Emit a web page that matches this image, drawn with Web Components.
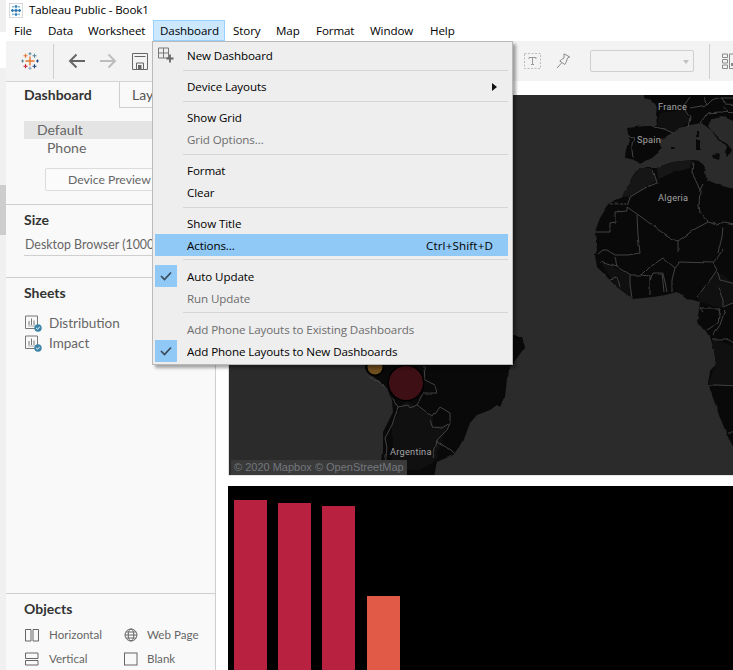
<!DOCTYPE html>
<html lang="en"><head><meta charset="utf-8"><title>Tableau Public - Book1</title>
<style>html,body{margin:0;padding:0;height:670px;overflow:hidden;background:#fff}</style></head>
<body>
<app-shell>
  <title-bar>Tableau Public - Book1</title-bar>
  <menu-bar></menu-bar>
  <tool-bar></tool-bar>
  <div slot="work" style="display:flex;height:589px">
    <side-panel></side-panel>
    <dash-canvas></dash-canvas>
  </div>
  <drop-menu slot="overlay"></drop-menu>
</app-shell>
<script>
const UI='"Open Sans","Noto Sans",sans-serif', TB='Lato,"Open Sans",sans-serif';
function def(name,html,init){
  customElements.define(name,class extends HTMLElement{
    constructor(){super();this.attachShadow({mode:'open'}).innerHTML=typeof html==='function'?html(this):html;}
    connectedCallback(){ if(init) init(this); }
  });
}
def('app-shell',`<style>
:host{display:flex;position:relative;width:733px;height:670px;overflow:hidden;background:#fff;color:#000}
.rail{width:6px;flex:none;display:flex;flex-direction:column}
.rail i{display:block}
main{flex:1;min-width:0;display:flex;flex-direction:column}
</style>
<div class="rail"><i style="height:32px;background:#f0f0f0"></i><i style="height:36px;background:#fff"></i><i style="height:117px;background:#f0f0f0"></i><i style="height:50px;background:#cdcdcd"></i><i style="flex:1;background:#f0f0f0"></i></div>
<main><slot></slot><slot name="work"></slot></main><slot name="overlay"></slot>`);

def('title-bar',`<style>
:host{display:flex;align-items:center;height:20px;font:11.600px/20px ${UI};letter-spacing:-.12px}
svg{margin:0 6px 0 3px;flex:none}
</style>
<svg width="14" height="15" viewBox="0 0 14 15"><rect x=".5" y=".5" width="13" height="14" fill="#fff" stroke="#d8d8d8"/>
<g fill="none" stroke="#2f7fb5" stroke-width="1.3"><path d="M7 2v3M5.6 3.5h2.8M7 10v3M5.6 11.5h2.8M2 7.5h3M3.5 6v3M9 7.5h3M10.5 6v3"/><path d="M7 5.8v3.4M5.3 7.5h3.4" stroke="#1d6aa5"/></g>
<g fill="#5b9cc7"><rect x="3.2" y="3" width="1.5" height="1.5"/><rect x="9.3" y="3" width="1.5" height="1.5"/><rect x="3.2" y="10.6" width="1.5" height="1.5"/><rect x="9.3" y="10.6" width="1.5" height="1.5"/></g></svg>
<slot></slot>`);

def('menu-bar',`<style>
:host{display:flex;align-items:stretch;height:21px;font:11.600px/20px ${UI};letter-spacing:-.1px;padding-left:1px}
span{display:block;flex:none;padding:0 0 0 6px;box-sizing:border-box;height:21px;border:1px solid transparent;border-bottom:0;white-space:nowrap}
.on{background:#cce8ff;border-color:#99d1ff;border-bottom:1px solid #99d1ff}
</style>
<span style="width:34px">File</span><span style="width:40px">Data</span><span style="width:72px">Worksheet</span><span class="on" style="width:72px">Dashboard</span><span style="width:43px;margin-left:1px">Story</span><span style="width:40px">Map</span><span style="width:54px">Format</span><span style="width:60px">Window</span><span style="width:40px">Help</span>`);

def('tool-bar',`<style>
:host{display:flex;align-items:center;height:40px;background:#f3f3f3;box-sizing:border-box}
svg{flex:none;display:block}
.sep{flex:none;width:1px;height:35px;background:#cfcfcf}
.combo{flex:none;width:104px;height:22px;box-sizing:border-box;border:1px solid #cfcfcf;border-radius:2px;position:relative;margin-left:19px}
.combo:after{content:"";position:absolute;right:4px;top:9px;border:3.5px solid transparent;border-top:4px solid #c0c0c0}
</style>
<svg style="margin-left:15px" width="18" height="18" viewBox="0 0 18 18" fill="none" stroke-width="1.1">
<path d="M9 4.5v9M4.5 9h9" stroke="#e8762d" stroke-width="1.4"/>
<path d="M4.5 1.8v4M2.5 3.8h4" stroke="#e8762d"/><path d="M9 .3v3M7.5 1.8h3" stroke="#5b879b"/><path d="M13.5 1.8v4M11.5 3.8h4" stroke="#5b879b"/>
<path d="M1.5 7.6v2.8M.2 9h2.8" stroke="#5b879b"/><path d="M16.5 7.6v2.8M15 9h2.8" stroke="#1f447d"/>
<path d="M4.5 12.2v4M2.5 14.2h4" stroke="#c72035"/><path d="M9 14.7v3M7.5 16.2h3" stroke="#7f9bbd"/><path d="M13.5 12.2v4M11.5 14.2h4" stroke="#1f447d"/></svg>
<div class="sep" style="margin-left:14px"></div>
<svg style="margin-left:14px" width="17" height="16" viewBox="0 0 17 16" fill="none" stroke="#666" stroke-width="2"><path d="M17 8H2M8.5 1.5 2 8l6.500 6.500"/></svg>
<svg style="margin-left:15px" width="17" height="16" viewBox="0 0 17 16" fill="none" stroke="#bdbdbd" stroke-width="2"><path d="M0 8h15M8.500 1.500 15 8l-6.500 6.500"/></svg>
<svg style="margin-left:15px" width="16" height="17" viewBox="0 0 16 17" fill="none" stroke="#666" stroke-width="1"><path d="M.5.5h15v16H.5zM2.500 3.500h11"/><path d="M4.500 16v-6h7v6"/><rect x="6" y="12" width="3.500" height="4.500" fill="#666" stroke="none"/></svg>
<svg style="margin-left:376px" width="18" height="16" viewBox="0 0 18 16" fill="none"><rect x=".5" y=".5" width="16" height="15" stroke="#bdbdbd" stroke-dasharray="2 1.500"/><path d="M5 6V4.500h7V6M8.500 4.500v7M7 11.500h3" stroke="#999" stroke-width="1"/></svg>
<svg style="margin-left:14px" width="15" height="16" viewBox="0 0 15 16" fill="none" stroke="#8a8a8a" stroke-width="1"><path d="M8 .8 13.800 4 11.500 5 10 9.500 8.800 11.500 3.800 8 5.500 6.500 8 5z"/><path d="M5.500 10 1 15"/></svg>
<div class="combo"></div>
<div class="sep" style="margin-left:15px"></div>
<svg style="margin-left:12px" width="12" height="16" viewBox="0 0 12 16" fill="none" stroke="#8a8a8a"><path d="M.5 1h5v3.500h-5zM.5 6.500h5V10h-5zM.5 12h5v3.500h-5zM7.500 1H12v14.500H7.500z"/><rect x="9" y="10" width="3" height="3" fill="#8a8a8a" stroke="none"/></svg>`);

def('side-panel',`<style>
:host{flex:none;width:210px;height:589px;box-sizing:border-box;background:#f9f9f9;border-right:1px solid #cfcfcf;border-top:1px solid #d4d4d4;font:14px/18px ${TB};color:#666;display:flex;flex-direction:column;overflow:hidden}
.tabs{display:flex;height:26px;flex:none}
.tab{width:114px;box-sizing:border-box;padding-left:18px;border-right:1px solid #cfcfcf;font-weight:700;color:#333;line-height:25px;flex:none}
.tab2{flex:1;border-bottom:1px solid #cfcfcf;padding-left:12px;line-height:25px;color:#555}
.layouts{padding:13px 0 13px 18px;border-bottom:1px solid #cfcfcf;height:70px;flex:none}
.def{background:#e4e4e4;padding-left:13px;height:18px;line-height:18px}
.ph{padding-left:23px;height:18px;line-height:18px}
button{display:block;margin:11px 0 0 21px;width:130px;height:23px;box-sizing:border-box;text-align:left;padding:0 0 0 22px;font:12.200px/20px ${TB};color:#666;background:#fbfbfb;border:1px solid #dcdcdc;border-radius:2px}
h3{margin:0;font:700 14px/18px ${TB};color:#333}
.size{padding:6px 0 0 18px;height:73px;box-sizing:border-box;border-bottom:1px solid #cfcfcf;flex:none}
.dsel{margin:6px 6px 0 0;padding:1px 0 0 1px;height:21px;line-height:18px;box-sizing:border-box;border-bottom:1px solid #cfcfcf;font-size:12.400px;white-space:nowrap}
.sheets{padding:6px 0 0 18px;flex:1}
.sh{display:flex;align-items:center;height:20px;margin-left:1px;font-size:13.500px}
.obj{border-top:1px solid #cfcfcf;flex:none;height:77px;padding:6px 0 0 18px;box-sizing:border-box;overflow:hidden}
.grid{display:grid;grid-template-columns:99px 1fr;grid-auto-rows:24px;margin-top:5px;font-size:11.600px;color:#666}
.g{display:flex;align-items:center;margin-left:1px}
.g svg{flex:none;margin-right:10px}
.g2 svg{margin-right:9px}
</style>
<div class="tabs"><div class="tab">Dashboard</div><div class="tab2">Layout</div></div>
<div class="layouts"><div class="def">Default</div><div class="ph">Phone</div><button>Device Preview</button></div>
<div class="size"><h3>Size</h3><div class="dsel">Desktop Browser (1000</div></div>
<div class="sheets"><h3>Sheets</h3><div style="height:11px"></div>
<div class="sh"><sheet-icon></sheet-icon>Distribution</div><div class="sh"><sheet-icon></sheet-icon>Impact</div></div>
<div class="obj"><h3>Objects</h3><div class="grid">
<div class="g"><svg width="14" height="14" viewBox="0 0 14 14" fill="none" stroke="#666"><path d="M.5 1.500h5.500v11.500H.5zM8 1.500h5.500v11.500H8z"/></svg>Horizontal</div>
<div class="g g2"><svg width="14" height="14" viewBox="0 0 14 14" fill="none" stroke="#666"><circle cx="7" cy="7" r="6"/><ellipse cx="7" cy="7" rx="2.800" ry="6"/><path d="M1 7h12M2 4h10M2 10h10"/></svg>Web Page</div>
<div class="g"><svg width="14" height="14" viewBox="0 0 14 14" fill="none" stroke="#666"><path d="M.5 1h12.500v5.500H.5zM.5 8.500h12.500V13H.5z"/></svg>Vertical</div>
<div class="g g2"><svg width="14" height="14" viewBox="0 0 14 14" fill="none" stroke="#666"><rect x=".5" y="1" width="12.500" height="12"/></svg>Blank</div>
</div></div>`);

def('sheet-icon',`<style>:host{display:block;flex:none;margin-right:7px;width:17px;height:17px}svg{display:block}</style>
<svg width="17" height="17" viewBox="0 0 17 17" fill="none"><path d="M.5 1h12v12.500H.5" stroke="#777"/><path d="M.5 1v12.500" stroke="#777"/><path d="M4 10V6M6.500 10V3.500M9 10V5.500" stroke="#777"/><path d="M3 11h7.500" stroke="#777" stroke-width=".6"/><circle cx="13" cy="13" r="3.700" fill="#3d83a8"/><path d="M11.200 13l1.300 1.300 2.200-2.500" stroke="#fff"/></svg>`);

def('dash-canvas',`<style>
:host{display:block;flex:1;min-width:0;height:589px;padding:14px 0 0 12px;box-sizing:border-box;overflow:hidden;background:#fff}
</style><map-view></map-view><bar-chart></bar-chart>`);

def('map-view',`<style>
:host{display:block;position:relative;height:381px;box-sizing:border-box;border-left:1px solid #dedede;border-bottom:1px solid #e6e6e6;background:#2b2b2b;overflow:hidden}
svg{display:block;width:504px;height:381px}
text{font:9.200px Roboto,sans-serif;fill:#a3a3a3;letter-spacing:.25px}
.c{position:absolute;left:2px;bottom:0;height:15px;width:176px;background:#3a3a3a;font:11px/15px "Liberation Sans",sans-serif;color:#72777d;padding-left:3px;box-sizing:border-box;white-space:nowrap}
</style>
<svg viewBox="229 95 504 381">
<defs><filter id="b" x="0" y="0" width="1" height="1" color-interpolation-filters="sRGB"><feTurbulence type="fractalNoise" baseFrequency=".09" numOctaves="2" seed="4" result="n"/><feDisplacementMap in="SourceGraphic" in2="n" scale="3" xChannelSelector="R" yChannelSelector="G"/><feGaussianBlur stdDeviation=".4"/></filter></defs>
<g filter="url(#b)">
<g fill="#090909">
<path d="M645,90 L644,98 L649,100 L657,105 L656,115 L657,126 L645,126 L627,128 L629,140 L626,150 L625,158 L634,160 L639,164 L653,157 L658,153 L662,148 L660,140 L672,133 L680,128 L690,125 L702,123 L712,131 L722,141 L729,146 L732,150 L728,157 L725,152 L727,147 L716,137 L708,126 L712,118 L722,116 L740,124 L740,90Z"/>
<path d="M712,155 L720,154 L719,160 L713,158Z M696,140 L700,140 L700,150 L696,150Z M697,131 L699,131 L699,138 L697,138Z M671,147 L675,147 L674,149 L671,149Z"/>
<path d="M740,190 L722,186 L707,180 L705,172 L706,166 L700,161 L693,160 L683,161 L673,162 L664,165 L657,168 L648,168 L640,168 L635,173 L630,180 L628,188 L623,197 L616,200 L610,203 L605,210 L600,218 L597,226 L595,232 L596,242 L597,250 L595,255 L597,267 L605,275 L612,282 L617,287 L625,293 L633,299 L643,298 L653,297 L665,295 L677,292 L681,295 L685,299 L693,300 L700,302 L699,310 L697,322 L703,329 L710,337 L714,350 L716,363 L710,372 L708,383 L713,398 L720,417 L727,435 L740,460Z"/>
<path d="M365,355 L365,369 L375,378 L387,388 L392,400 L393,412 L388,422 L383,432 L383,450 L381,482 L433,482 L437,462 L453,455 L463,442 L470,423 L477,415 L490,410 L497,405 L500,407 L505,397 L508,370 L517,358 L525,347 L522,338 L513,335 L500,330 L400,330Z"/>
</g>
<g fill="#161616"><path d="M623,197 L630,180 L640,168 L652,169 L656,181 L646,188 L631,196Z"/><path d="M657,168 L673,162 L692,160 L690,168 L672,173 L658,179Z"/></g>
<g fill="#101010"><path d="M600,262 L630,275 L632,298 L617,287Z"/><path d="M697,297 L717,271 L740,287 L740,300 L720,307 L700,302Z"/><path d="M712,339 L740,348 L740,385 L708,385 L716,363Z"/><path d="M660,113 L685,110 L690,122 L672,132 L657,126Z"/><path d="M405,400 L433,417 L433,427 L448,424 L440,445 L437,460 L420,470 L392,470 L392,425Z"/></g>
<g fill="none" stroke="#464646" stroke-width=".95" stroke-linejoin="round">
<path d="M628,137 L634,138 L632,144 L632,150 L633,158"/><path d="M655,127 L664,129 L673,133"/>
<path d="M690,97 L685,104 L685,110 L690,118 L688,127"/><path d="M690,108 L707,105 L712,100 L717,98 L740,98"/><path d="M700,123 L704,118 L707,113 L720,112 L740,113"/><path d="M705,96 L707,105 M722,105 L728,112 M722,98 L725,104 L740,105"/>
<path d="M653,170 L655,176 L657,183 L645,188 L630,197 L627,205"/>
<path d="M610,204 H627" stroke-dasharray="3 1.500"/>
<path d="M627,207 L627,211 L615,212 L615,222 L610,223 L610,232 L595,232"/>
<path d="M627,207 L640,216 L660,231 L675,240 L678,241 L695,229 L708,222"/>
<path d="M637,215 L638,235 L640,253 L628,255 L615,255 L607,250 L603,250 L598,254"/>
<path d="M693,162 L692,173 L696,181 L700,190 L699,205 L700,213 L708,222 L718,225 L723,222 L740,225"/>
<path d="M700,190 L703,184 L707,180"/><path d="M678,241 L678,253"/><path d="M723,227 L722,237 L718,253"/>
<path d="M600,262 L617,267 L615,257 M617,267 L630,275 L630,285 L632,298"/>
<path d="M610,280 L617,278 L620,287"/>
<path d="M630,275 L642,275 L650,267 L663,258 L675,268 L680,262 L713,263 L717,270 L710,280 L697,297"/>
<path d="M642,275 L650,276 L650,295 M653,273 L663,273 L667,292 M653,273 L650,282 M662,273 L664,292 M675,268 L672,280 L672,292"/>
<path d="M713,263 L723,250"/><path d="M717,270 L720,280 L740,285"/><path d="M718,287 L723,300 L723,307"/>
<path d="M700,308 L720,308 L718,323 L707,330"/><path d="M723,307 L740,300"/><path d="M700,308 L703,312 M725,310 L720,325 L713,335"/>
<path d="M712,339 L728,339 L740,348"/><path d="M708,385 L715,385 L740,386"/><path d="M727,432 L740,432"/>
<path d="M424,366 L425,380 L435,385 L437,393 L423,393 L417,405 L433,417 L440,407 L450,413 L450,423 L442,428 L433,427 L430,420"/>
<path d="M417,405 L410,408 L408,405 L398,407 L392,425 L385,438 L387,448 L383,482"/>
<path d="M450,423 L447,430 L437,440 L433,458"/><path d="M437,441 L450,450 L453,453"/><path d="M392,397 L398,407"/><path d="M367,375 L385,387"/>
</g></g>
<circle cx="375" cy="367" r="9.500" fill="#000" opacity=".7"/><circle cx="375" cy="367" r="7.500" fill="#6e4d1e"/>
<circle cx="406" cy="383" r="18.500" fill="#000"/><circle cx="406" cy="383" r="17" fill="#3e0f15"/>
<text x="658" y="110">France</text><text x="637" y="143">Spain</text><text x="658" y="201">Algeria</text><text x="390" y="455">Argentina</text>
</svg>
<div class="c">© 2020 Mapbox © OpenStreetMap</div>`);

def('bar-chart',`<style>
:host{display:flex;align-items:flex-start;height:190px;margin-top:10px;background:#000;overflow:hidden;padding-left:6px}
i{display:block;width:33px;height:200px;background:#b8213f;margin-right:11px;flex:none}
</style><i style="margin-top:14px"></i><i style="margin-top:17px"></i><i style="margin-top:20px;margin-right:12px"></i><i style="margin-top:110px;background:#e05a47"></i>`);

def('drop-menu',`<style>
:host{position:absolute;left:152px;top:41px;width:361px;box-sizing:border-box;height:324px;padding:3px 4px 0 2px;background:#eee;border:1px solid #b9b9b9;box-shadow:3px 3px 3px rgba(0,0,0,.35);font:11.600px/22px ${UI};letter-spacing:-.1px;display:block}
hr{border:0;height:1px;background:#d5d5d5;margin:3px 0 5px 28px}
.low{--dy:2px}
</style>
<menu-item icon="new">New Dashboard</menu-item><hr>
<menu-item arrow>Device Layouts</menu-item><hr>
<menu-item>Show Grid</menu-item><menu-item disabled>Grid Options...</menu-item><hr>
<menu-item>Format</menu-item><menu-item>Clear</menu-item><hr style="margin-bottom:4px">
<div class="low"><menu-item>Show Title</menu-item><menu-item active shortcut="Ctrl+Shift+D">Actions...</menu-item><hr>
<menu-item checked>Auto Update</menu-item><menu-item disabled>Run Update</menu-item><hr>
<menu-item disabled>Add Phone Layouts to Existing Dashboards</menu-item><menu-item checked>Add Phone Layouts to New Dashboards</menu-item></div>`);

def('menu-item',(el)=>`<style>
:host{display:flex;height:22px;align-items:center;white-space:nowrap}
:host([disabled]){color:#6d6d6d}
:host([active]){background:#90c8f6}
.ic{width:22px;height:22px;flex:none;display:flex;align-items:center;justify-content:center;margin-right:10px}
:host([checked]) .ic{background:#90c8f6}
.t{flex:1;padding-top:var(--dy,0);line-height:20px}
.r{margin-right:15px;padding-top:var(--dy,0);line-height:20px;letter-spacing:.15px}
.a{width:0;height:0;border:4px solid transparent;border-left:5px solid #111;border-right:0;margin-right:11px}
</style><span class="ic"></span><span class="t"><slot></slot></span>`,(el)=>{
  const r=el.shadowRoot, ic=r.querySelector('.ic');
  if(el.hasAttribute('checked')) ic.innerHTML='<svg width="12" height="10" viewBox="0 0 12 10" fill="none" stroke="#3c4a57" stroke-width="1.700"><path d="M1 5l3.500 3.500L11 1.500"/></svg>';
  if(el.getAttribute('icon')==='new') ic.innerHTML='<svg width="16" height="16" viewBox="0 0 16 16" fill="none" stroke="#666" style="margin-top:-3px"><path d="M.5 1h10v10H.5zM5.500 1v10M.5 6h10" stroke="#777"/><path d="M12 7.500v8M8.500 11.500h7" stroke-width="1.800" stroke="#666"/></svg>';
  if(el.getAttribute('shortcut')&&!r.querySelector('.r')){const s=document.createElement('span');s.className='r';s.textContent=el.getAttribute('shortcut');r.appendChild(s);}
  if(el.hasAttribute('arrow')&&!r.querySelector('.a')){const s=document.createElement('span');s.className='a';r.appendChild(s);}
});
</script>
</body></html>
